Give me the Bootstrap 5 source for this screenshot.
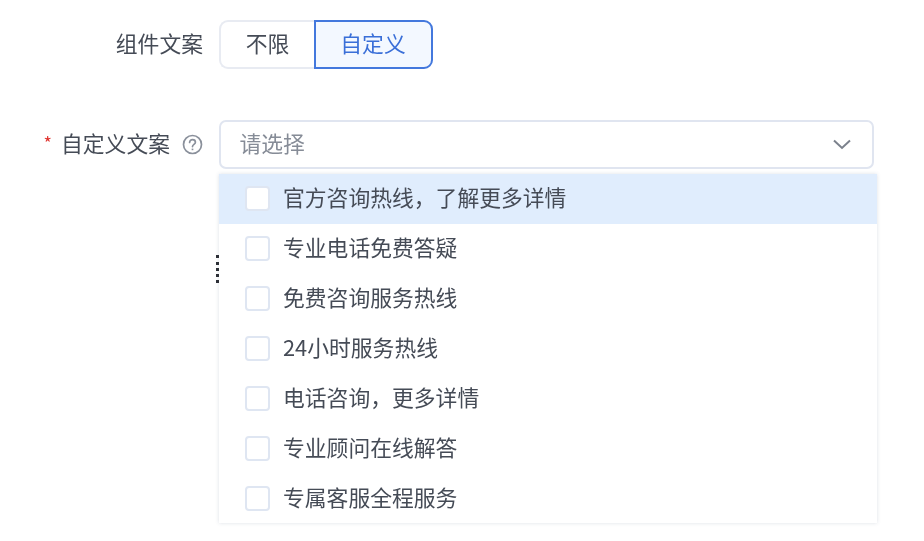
<!DOCTYPE html>
<html lang="zh">
<head>
<meta charset="utf-8">
<title>组件文案</title>
<link href="https://cdn.jsdelivr.net/npm/bootstrap@5.3.0/dist/css/bootstrap.min.css" rel="stylesheet">
<style>
html,body{width:924px;height:541px;overflow:hidden;background:#fff}
body{font-family:"Noto Sans CJK SC","Liberation Sans",sans-serif;font-size:21.8px;color:#454b56;line-height:30px}
.stage{padding:19.5px 0 0 0;width:924px;filter:blur(.45px)}
.form-line{display:flex;align-items:stretch}
.label-cell{width:203px;flex:none;display:flex;align-items:center;justify-content:flex-end;color:#454b56;padding-bottom:3px}
.field-cell{margin-left:16px;flex:none}
.seg-one{width:95px;height:49px;padding:0 0 3px;font-size:21.8px;color:#454b56;background:#fff;border:2px solid #e8ebf2;border-right:0;border-radius:9px 0 0 9px}
.seg-two{width:119px;height:49px;padding:0 0 3px;font-size:21.8px;color:#3a6fd8;background:#f3f8ff;border:2px solid #4378dd;border-radius:0 9px 9px 0;margin-left:-0.5px}
.gap-line{margin-top:51px}
.star{color:#e0322e;font-size:18px;margin-right:9px;line-height:1;position:relative;top:-1px}
.help-ico{margin-left:12px;margin-top:3px;display:block}
.pick-box{width:654.5px;height:49px;border:2px solid #e0e5f0;border-radius:7px;padding:0 21px 2px 18.5px;color:#868c97}
.pick-box svg{margin-top:3px}
.drop-panel{width:658px;height:349.5px;margin-left:219px;margin-top:5px;background:#fff;box-shadow:0 0 4px rgba(40,60,100,.16);position:relative}
.opt-row{height:50px;padding:0 0 0 26px;gap:13px;display:flex;align-items:center}
.opt-row span:last-child{margin-bottom:4px}
.opt-row.on{background:#e0edfd}
.tick-box{width:25px;height:25px;flex:none;background:#fff;border:2px solid #dfe6f2;border-radius:4px}
.dots{position:absolute;left:-3px;top:81px;width:3px;height:28px;border-left:3px dotted #2c2f36}
</style>
</head>
<body>
<main class="stage">
  <div class="form-line">
    <div class="label-cell">组件文案</div>
    <div class="field-cell d-flex">
      <button type="button" class="seg-one">不限</button>
      <button type="button" class="seg-two">自定义</button>
    </div>
  </div>
  <div class="form-line gap-line">
    <div class="label-cell">
      <span class="star">*</span><span>自定义文案</span>
      <svg class="help-ico" width="21" height="21" viewBox="0 0 21 21" fill="none" stroke="#8a909b" stroke-width="1.7"><circle cx="10.5" cy="10.5" r="9"/><path d="M7.6 8.4c0-1.7 1.3-2.8 2.9-2.8s2.9 1.1 2.9 2.6c0 2.2-2.9 2.2-2.9 4.4" stroke-linecap="round"/><path d="M10.5 14.6v1.6"/></svg>
    </div>
    <div class="field-cell">
      <div class="pick-box d-flex align-items-center justify-content-between">
        <span>请选择</span>
        <svg width="18" height="11" viewBox="0 0 18 11" fill="none" stroke="#7b818c" stroke-width="2"><path d="M1 1.5l8 7.5 8-7.5"/></svg>
      </div>
    </div>
  </div>
  <div class="drop-panel">
    <span class="dots"></span>
    <div class="opt-row on"><span class="tick-box"></span><span>官方咨询热线，了解更多详情</span></div>
    <div class="opt-row"><span class="tick-box"></span><span>专业电话免费答疑</span></div>
    <div class="opt-row"><span class="tick-box"></span><span>免费咨询服务热线</span></div>
    <div class="opt-row"><span class="tick-box"></span><span>24小时服务热线</span></div>
    <div class="opt-row"><span class="tick-box"></span><span>电话咨询，更多详情</span></div>
    <div class="opt-row"><span class="tick-box"></span><span>专业顾问在线解答</span></div>
    <div class="opt-row"><span class="tick-box"></span><span>专属客服全程服务</span></div>
  </div>
</main>
<script src="https://cdn.jsdelivr.net/npm/bootstrap@5.3.0/dist/js/bootstrap.bundle.min.js"></script>
</body>
</html>
